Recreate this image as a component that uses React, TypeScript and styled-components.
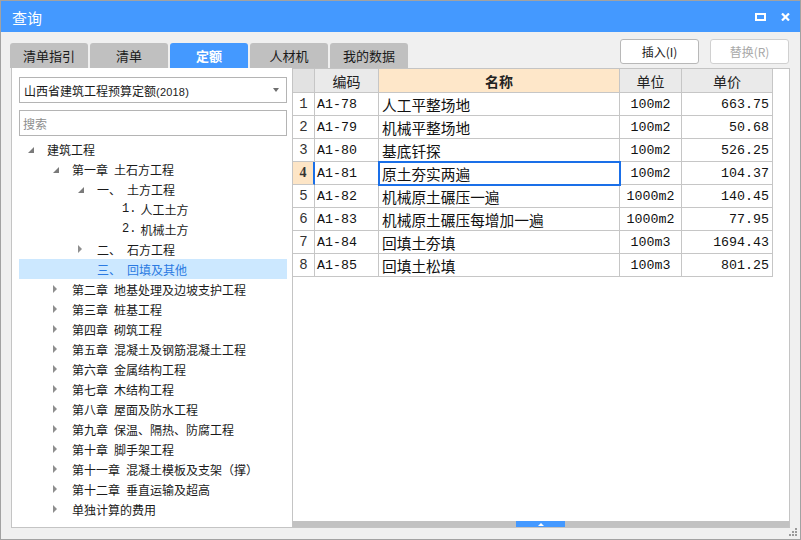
import React from 'react';
import styled, { createGlobalStyle } from 'styled-components';

const GlobalStyle = createGlobalStyle`
  html, body {
    margin: 0;
    padding: 0;
    background: #ffffff;
  }
  body {
    font-family: "Noto Sans CJK SC", "Noto Sans", sans-serif;
  }
`;

const CJK = '"Noto Sans CJK SC", "Noto Sans", sans-serif';
const MONO = '"Liberation Mono", "Noto Sans CJK SC", monospace';

interface TreeNode {
  level: number;
  state: 'open' | 'closed' | 'leaf';
  prefix?: string;
  text: string;
  numbered?: boolean;
  selected?: boolean;
}

interface Quota {
  code: string;
  name: string;
  unit: string;
  price: string;
}

const tree: TreeNode[] = [
  { level: 0, state: 'open', text: '建筑工程' },
  { level: 1, state: 'open', prefix: '第一章', text: '土石方工程' },
  { level: 2, state: 'open', prefix: '一、', text: '土方工程' },
  { level: 3, state: 'leaf', prefix: '1.', text: '人工土方', numbered: true },
  { level: 3, state: 'leaf', prefix: '2.', text: '机械土方', numbered: true },
  { level: 2, state: 'closed', prefix: '二、', text: '石方工程' },
  { level: 2, state: 'leaf', prefix: '三、', text: '回填及其他', selected: true },
  { level: 1, state: 'closed', prefix: '第二章', text: '地基处理及边坡支护工程' },
  { level: 1, state: 'closed', prefix: '第三章', text: '桩基工程' },
  { level: 1, state: 'closed', prefix: '第四章', text: '砌筑工程' },
  { level: 1, state: 'closed', prefix: '第五章', text: '混凝土及钢筋混凝土工程' },
  { level: 1, state: 'closed', prefix: '第六章', text: '金属结构工程' },
  { level: 1, state: 'closed', prefix: '第七章', text: '木结构工程' },
  { level: 1, state: 'closed', prefix: '第八章', text: '屋面及防水工程' },
  { level: 1, state: 'closed', prefix: '第九章', text: '保温、隔热、防腐工程' },
  { level: 1, state: 'closed', prefix: '第十章', text: '脚手架工程' },
  { level: 1, state: 'closed', prefix: '第十一章', text: '混凝土模板及支架（撑）' },
  { level: 1, state: 'closed', prefix: '第十二章', text: '垂直运输及超高' },
  { level: 1, state: 'closed', text: '单独计算的费用' },
];

const quotas: Quota[] = [
  { code: 'A1-78', name: '人工平整场地', unit: '100m2', price: '663.75' },
  { code: 'A1-79', name: '机械平整场地', unit: '100m2', price: '50.68' },
  { code: 'A1-80', name: '基底钎探', unit: '100m2', price: '526.25' },
  { code: 'A1-81', name: '原土夯实两遍', unit: '100m2', price: '104.37' },
  { code: 'A1-82', name: '机械原土碾压一遍', unit: '1000m2', price: '140.45' },
  { code: 'A1-83', name: '机械原土碾压每增加一遍', unit: '1000m2', price: '77.95' },
  { code: 'A1-84', name: '回填土夯填', unit: '100m3', price: '1694.43' },
  { code: 'A1-85', name: '回填土松填', unit: '100m3', price: '801.25' },
];

const tabs = ['清单指引', '清单', '定额', '人材机', '我的数据'];
const activeTab = 2;
const activeRow = 3;

const Window = styled.div`
  position: relative;
  width: 801px;
  height: 540px;
  box-sizing: border-box;
  border: 1px solid #a2a2a2;
  background: #f0f0f0;
  display: flex;
  flex-direction: column;
  overflow: hidden;
`;

const TitleBar = styled.div`
  height: 31px;
  flex: none;
  background: #4499ff;
  color: #ffffff;
  display: flex;
  align-items: center;
  justify-content: space-between;
  padding: 0 10px 0 11px;
  font-family: ${CJK};
  font-size: 15px;
`;

const TitleText = styled.span`
  margin-top: 1px;
`;

const TitleButtons = styled.div`
  display: flex;
  align-items: center;
  gap: 15px;
  margin-top: 1px;
`;

const MaxIcon = styled.span`
  display: block;
  width: 11px;
  height: 8px;
  box-sizing: border-box;
  border: 2px solid #ffffff;
  border-left-width: 2px;
`;

const Body = styled.div`
  flex: 1;
  display: flex;
  flex-direction: column;
  padding: 0 10px 11px 10px;
  min-height: 0;
`;

const TopRow = styled.div`
  height: 36px;
  flex: none;
  display: flex;
  justify-content: space-between;
`;

const TabStrip = styled.div`
  align-self: flex-end;
  display: flex;
  gap: 2px;
  margin-left: -1px;
`;

const Tab = styled.div<{ $active?: boolean }>`
  width: 78px;
  height: 25px;
  border-radius: 3px 3px 0 0;
  background: ${(p) => (p.$active ? '#4499ff' : '#c0c0c0')};
  color: ${(p) => (p.$active ? '#ffffff' : '#1a1a1a')};
  font-weight: ${(p) => (p.$active ? 700 : 400)};
  font-family: ${CJK};
  font-size: 13px;
  display: flex;
  align-items: center;
  justify-content: center;
`;

const ButtonGroup = styled.div`
  display: flex;
  gap: 11px;
  padding: 7px 1px 0 0;
`;

const ActionButton = styled.button<{ $disabled?: boolean }>`
  width: 79px;
  height: 25px;
  box-sizing: border-box;
  border: 1px solid ${(p) => (p.$disabled ? '#d0d0d0' : '#b8b8b8')};
  border-radius: 3px;
  background: #ffffff;
  color: ${(p) => (p.$disabled ? '#a8a8a8' : '#1a1a1a')};
  font-family: ${CJK};
  font-size: 12px;
  padding: 0;
  display: flex;
  align-items: center;
  justify-content: center;
`;

const Content = styled.div`
  height: 460px;
  flex: none;
  display: flex;
`;

const LeftPanel = styled.div`
  width: 281px;
  flex: none;
  box-sizing: border-box;
  background: #ffffff;
  border-left: 1px solid #c4c4c4;
  border-bottom: 1px solid #c4c4c4;
  padding: 9px 5px 0 7px;
  display: flex;
  flex-direction: column;
`;

const SelectBox = styled.div`
  height: 26px;
  box-sizing: border-box;
  border: 1px solid #b4b4b4;
  display: flex;
  align-items: center;
  justify-content: space-between;
  padding: 0 7px 0 4px;
  font-family: ${CJK};
  font-size: 12px;
  color: #1a1a1a;
`;

const Year = styled.span`
  font-family: "Liberation Sans", ${CJK};
  font-size: 11px;
  letter-spacing: 0.2px;
`;

const DropArrow = styled.span`
  width: 0;
  height: 0;
  border-left: 3px solid transparent;
  border-right: 3px solid transparent;
  border-top: 4px solid #6e6e6e;
`;

const SearchBox = styled.div`
  height: 26px;
  margin-top: 7px;
  box-sizing: border-box;
  border: 1px solid #b4b4b4;
  display: flex;
  align-items: center;
  padding-left: 3px;
  font-family: ${CJK};
  font-size: 12px;
  color: #8e8e8e;
`;

const TreeList = styled.div`
  margin-top: 3px;
  display: flex;
  flex-direction: column;
`;

const TreeRow = styled.div<{ $level: number; $selected?: boolean }>`
  height: 20px;
  display: flex;
  align-items: center;
  padding-left: ${(p) => 9 + p.$level * 25}px;
  background: ${(p) => (p.$selected ? '#cce8ff' : 'transparent')};
  color: ${(p) => (p.$selected ? '#2a7ae2' : '#1a1a1a')};
  font-family: ${CJK};
  font-size: 12px;
  white-space: nowrap;
`;

const Toggle = styled.span`
  width: 19px;
  flex: none;
  display: flex;
  align-items: center;
`;

const ExpandedMark = styled.span`
  width: 0;
  height: 0;
  border-left: 6px solid transparent;
  border-bottom: 6px solid #7a7a7a;
  margin-top: 1px;
`;

const CollapsedMark = styled.span`
  width: 0;
  height: 0;
  border-top: 4px solid transparent;
  border-bottom: 4px solid transparent;
  border-left: 4px solid #8e8e8e;
`;

const Prefix = styled.span<{ $numbered?: boolean }>`
  margin-right: ${(p) => (p.$numbered ? 4 : 6)}px;
  font-family: ${(p) => (p.$numbered ? MONO : CJK)};
`;

const TablePanel = styled.div`
  flex: 1;
  box-sizing: border-box;
  border: 1px solid #c4c4c4;
  background: #ffffff;
  display: flex;
  flex-direction: column;
`;

const GridRow = styled.div<{ $header?: boolean }>`
  display: grid;
  grid-template-columns: 22px 64px 241px 62px 91px;
  height: ${(p) => (p.$header ? 24 : 23)}px;
`;

const Cell = styled.div`
  box-sizing: border-box;
  border-right: 1px solid #c6c6c6;
  border-bottom: 1px solid #c6c6c6;
  display: flex;
  align-items: center;
  overflow: hidden;
  white-space: nowrap;
  color: #111111;
`;

const HeaderCell = styled(Cell)<{ $tone?: 'dark' | 'peach' }>`
  justify-content: center;
  background: ${(p) => (p.$tone === 'peach' ? '#fee7c9' : p.$tone === 'dark' ? '#e2e2e2' : '#eaeaea')};
  font-family: ${CJK};
  font-size: 14px;
  font-weight: ${(p) => (p.$tone === 'peach' ? 700 : 400)};
  color: #222222;
`;

const RowNumCell = styled(Cell)<{ $active?: boolean }>`
  justify-content: center;
  background: ${(p) => (p.$active ? '#fde5c6' : '#ffffff')};
  border-right: ${(p) => (p.$active ? '2px solid #1a6fe8' : '1px solid #c6c6c6')};
  font-family: ${(p) => (p.$active ? '"Liberation Serif", serif' : MONO)};
  font-weight: ${(p) => (p.$active ? 700 : 400)};
  font-size: 14px;
  color: #333333;
`;

const CodeCell = styled(Cell)`
  padding-left: 2px;
  font-family: ${MONO};
  font-size: 13.3px;
`;

const NameCell = styled(Cell)<{ $selected?: boolean }>`
  position: relative;
  z-index: ${(p) => (p.$selected ? 1 : 0)};
  padding-left: 3px;
  font-family: ${CJK};
  font-size: 14.7px;
  outline: ${(p) => (p.$selected ? '2px solid #1a6fe8' : 'none')};
  outline-offset: -1px;
`;

const UnitCell = styled(Cell)`
  justify-content: center;
  font-family: ${MONO};
  font-size: 13.3px;
`;

const PriceCell = styled(Cell)`
  justify-content: flex-end;
  padding-right: 3px;
  font-family: ${MONO};
  font-size: 13.3px;
`;

const TableFill = styled.div`
  flex: 1;
`;

const HScrollTrack = styled.div`
  height: 6px;
  flex: none;
  background: #c2c2c2;
  display: flex;
`;

const HScrollThumb = styled.div`
  width: 49px;
  margin-left: 223px;
  background: #4499ff;
  display: flex;
  justify-content: center;
  align-items: center;
`;

const ThumbArrow = styled.span`
  width: 0;
  height: 0;
  border-left: 3px solid transparent;
  border-right: 3px solid transparent;
  border-bottom: 3px solid #ffffff;
`;

const Grip = styled.svg`
  position: absolute;
  right: 3px;
  bottom: 3px;
`;

function TreeItem({ node }: { node: TreeNode }) {
  return (
    <TreeRow $level={node.level} $selected={node.selected}>
      <Toggle>
        {node.state === 'open' && <ExpandedMark />}
        {node.state === 'closed' && <CollapsedMark />}
      </Toggle>
      {node.prefix && <Prefix $numbered={node.numbered}>{node.prefix}</Prefix>}
      <span>{node.text}</span>
    </TreeRow>
  );
}

export default function App() {
  return (
    <>
      <GlobalStyle />
      <Window>
        <TitleBar>
          <TitleText>查询</TitleText>
          <TitleButtons>
            <MaxIcon />
            <svg width="9" height="8" viewBox="0 0 9 8">
              <path d="M1 0.5 L8 7.5 M8 0.5 L1 7.5" stroke="#ffffff" strokeWidth="2.2" />
            </svg>
          </TitleButtons>
        </TitleBar>
        <Body>
          <TopRow>
            <TabStrip>
              {tabs.map((t, i) => (
                <Tab key={t} $active={i === activeTab}>
                  {t}
                </Tab>
              ))}
            </TabStrip>
            <ButtonGroup>
              <ActionButton>插入(I)</ActionButton>
              <ActionButton $disabled>替换(R)</ActionButton>
            </ButtonGroup>
          </TopRow>
          <Content>
            <LeftPanel>
              <SelectBox>
                <span>
                  山西省建筑工程预算定额<Year>(2018)</Year>
                </span>
                <DropArrow />
              </SelectBox>
              <SearchBox>搜索</SearchBox>
              <TreeList>
                {tree.map((n, i) => (
                  <TreeItem key={i} node={n} />
                ))}
              </TreeList>
            </LeftPanel>
            <TablePanel>
              <GridRow $header>
                <HeaderCell $tone="dark" />
                <HeaderCell>编码</HeaderCell>
                <HeaderCell $tone="peach">名称</HeaderCell>
                <HeaderCell>单位</HeaderCell>
                <HeaderCell>单价</HeaderCell>
              </GridRow>
              {quotas.map((q, i) => (
                <GridRow key={q.code}>
                  <RowNumCell $active={i === activeRow}>{i + 1}</RowNumCell>
                  <CodeCell>{q.code}</CodeCell>
                  <NameCell $selected={i === activeRow}>{q.name}</NameCell>
                  <UnitCell>{q.unit}</UnitCell>
                  <PriceCell>{q.price}</PriceCell>
                </GridRow>
              ))}
              <TableFill />
              <HScrollTrack>
                <HScrollThumb>
                  <ThumbArrow />
                </HScrollThumb>
              </HScrollTrack>
            </TablePanel>
          </Content>
        </Body>
        <Grip width="8" height="8" viewBox="0 0 8 8">
          <rect x="6" y="0" width="2" height="2" fill="#9a9a9a" />
          <rect x="3" y="3" width="2" height="2" fill="#9a9a9a" />
          <rect x="6" y="3" width="2" height="2" fill="#9a9a9a" />
          <rect x="0" y="6" width="2" height="2" fill="#9a9a9a" />
          <rect x="3" y="6" width="2" height="2" fill="#9a9a9a" />
          <rect x="6" y="6" width="2" height="2" fill="#9a9a9a" />
        </Grip>
      </Window>
    </>
  );
}
